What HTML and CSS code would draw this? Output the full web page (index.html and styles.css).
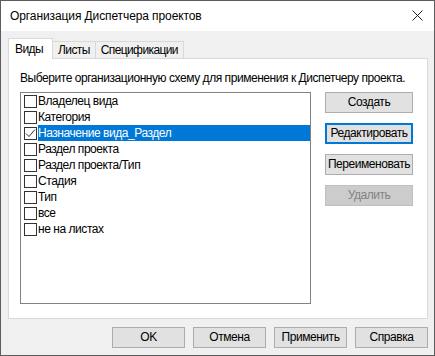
FILE: index.html
```html
<!DOCTYPE html>
<html>
<head>
  <title>Организация Диспетчера проектов</title>
  <link rel="stylesheet" href="styles.css">
</head>
<body>
  <div class="window">
    <div class="titleBar">
      <span class="titleText">Организация Диспетчера проектов</span>
      <svg class="closeIcon" width="11" height="11" viewBox="0 0 11 11">
        <path d="M0.5 0.5 L10.5 10.5 M10.5 0.5 L0.5 10.5" stroke="#222" stroke-width="1" fill="none"/>
      </svg>
    </div>

    <div class="content">
      <div class="tabs">
        <div class="tab active">Виды</div>
        <div class="tab">Листы</div>
        <div class="tab">Спецификации</div>
      </div>

      <div class="panel">
        <div class="hint">Выберите организационную схему для применения к Диспетчеру проекта.</div>
        <div class="panelBody">
          <div class="listBox">
            <div class="row"><span class="check"></span><span class="label">Владелец вида</span></div>
            <div class="row"><span class="check"></span><span class="label">Категория</span></div>
            <div class="row selected">
              <span class="check">
                <svg width="11" height="11" viewBox="0 0 11 11">
                  <path d="M1 5.5 L4 8.5 L10 1.5" stroke="#333" stroke-width="1" fill="none"/>
                </svg>
              </span>
              <span class="label">Назначение вида_Раздел</span>
            </div>
            <div class="row"><span class="check"></span><span class="label">Раздел проекта</span></div>
            <div class="row"><span class="check"></span><span class="label">Раздел проекта/Тип</span></div>
            <div class="row"><span class="check"></span><span class="label">Стадия</span></div>
            <div class="row"><span class="check"></span><span class="label">Тип</span></div>
            <div class="row"><span class="check"></span><span class="label">все</span></div>
            <div class="row"><span class="check"></span><span class="label">не на листах</span></div>
          </div>

          <div class="sideButtons">
            <button class="btn">Создать</button>
            <button class="btn focused">Редактировать</button>
            <button class="btn">Переименовать</button>
            <button class="btn" disabled>Удалить</button>
          </div>
        </div>
      </div>

      <div class="footer">
        <button class="btn footBtn">OK</button>
        <button class="btn footBtn">Отмена</button>
        <button class="btn footBtn">Применить</button>
        <button class="btn footBtn">Справка</button>
      </div>
    </div>
  </div>
</body>
</html>
```

FILE: styles.css
```css
html, body {
  margin: 0;
  padding: 0;
  background: #f0f0f0;
}

.window {
  width: 435px;
  height: 356px;
  box-sizing: border-box;
  border: 1px solid #5c5c5c;
  display: flex;
  flex-direction: column;
  font-family: "Liberation Sans", Arial, sans-serif;
  font-size: 12px;
  letter-spacing: -0.45px;
  color: #000;
  background: #f0f0f0;
}

.titleBar {
  height: 30px;
  flex: none;
  background: #fff;
  display: flex;
  align-items: center;
  justify-content: space-between;
  padding: 0 11px 0 9px;
}

.titleText {
  font-size: 12px;
  letter-spacing: -0.1px;
  margin-top: -1px;
}

.closeIcon {
  margin-top: -2px;
}

.content {
  flex: 1;
  display: flex;
  flex-direction: column;
  padding: 7px 6px 0 7px;
}

.tabs {
  display: flex;
  align-items: flex-end;
  height: 20px;
  position: relative;
  z-index: 1;
}

.tab {
  height: 17px;
  line-height: 16px;
  padding: 0 5px;
  letter-spacing: -0.6px;
  border: 1px solid #d9d9d9;
  border-bottom: none;
  border-left: none;
  background: #f0f0f0;
  box-sizing: border-box;
}

.tab.active {
  height: 21px;
  width: 45px;
  padding: 2px 6px 0;
  background: #fff;
  border-left: 1px solid #d9d9d9;
  margin-bottom: -1px;
}

.panel {
  height: 261px;
  box-sizing: border-box;
  width: 420px;
  background: #fff;
  border: 1px solid #d9d9d9;
  padding: 11px 13px 0 11px;
}

.hint {
  line-height: 16px;
  height: 16px;
  white-space: nowrap;
}

.panelBody {
  display: flex;
  margin-top: 6px;
  gap: 14px;
}

.listBox {
  width: 291px;
  height: 212px;
  box-sizing: border-box;
  border: 1px solid #828282;
  background: #fff;
}

.row {
  display: flex;
  height: 16px;
  align-items: center;
}

.check {
  width: 13px;
  height: 13px;
  box-sizing: border-box;
  border: 1px solid #333;
  background: #fff;
  margin: 0 1px 0 3px;
  display: flex;
  align-items: center;
  justify-content: center;
}

.label {
  flex: 1;
  line-height: 16px;
  height: 16px;
  white-space: nowrap;
}

.selected .label {
  background: #0078d7;
  color: #fff;
}

.sideButtons {
  display: flex;
  flex-direction: column;
  gap: 10px;
}

.btn {
  width: 88px;
  height: 21px;
  box-sizing: border-box;
  background: #e1e1e1;
  border: 1px solid #adadad;
  font-family: "Liberation Sans", Arial, sans-serif;
  font-size: 12px;
  letter-spacing: -0.45px;
  color: #000;
  padding: 0;
  line-height: 17px;
}

.btn.focused {
  border: 2px solid #0078d7;
}

.btn:disabled {
  background: #cccccc;
  border-color: #bfbfbf;
  color: #838383;
}

.footer {
  display: flex;
  justify-content: flex-end;
  gap: 8px;
  margin-top: 8px;
}

.footBtn {
  width: 73px;
}
```
